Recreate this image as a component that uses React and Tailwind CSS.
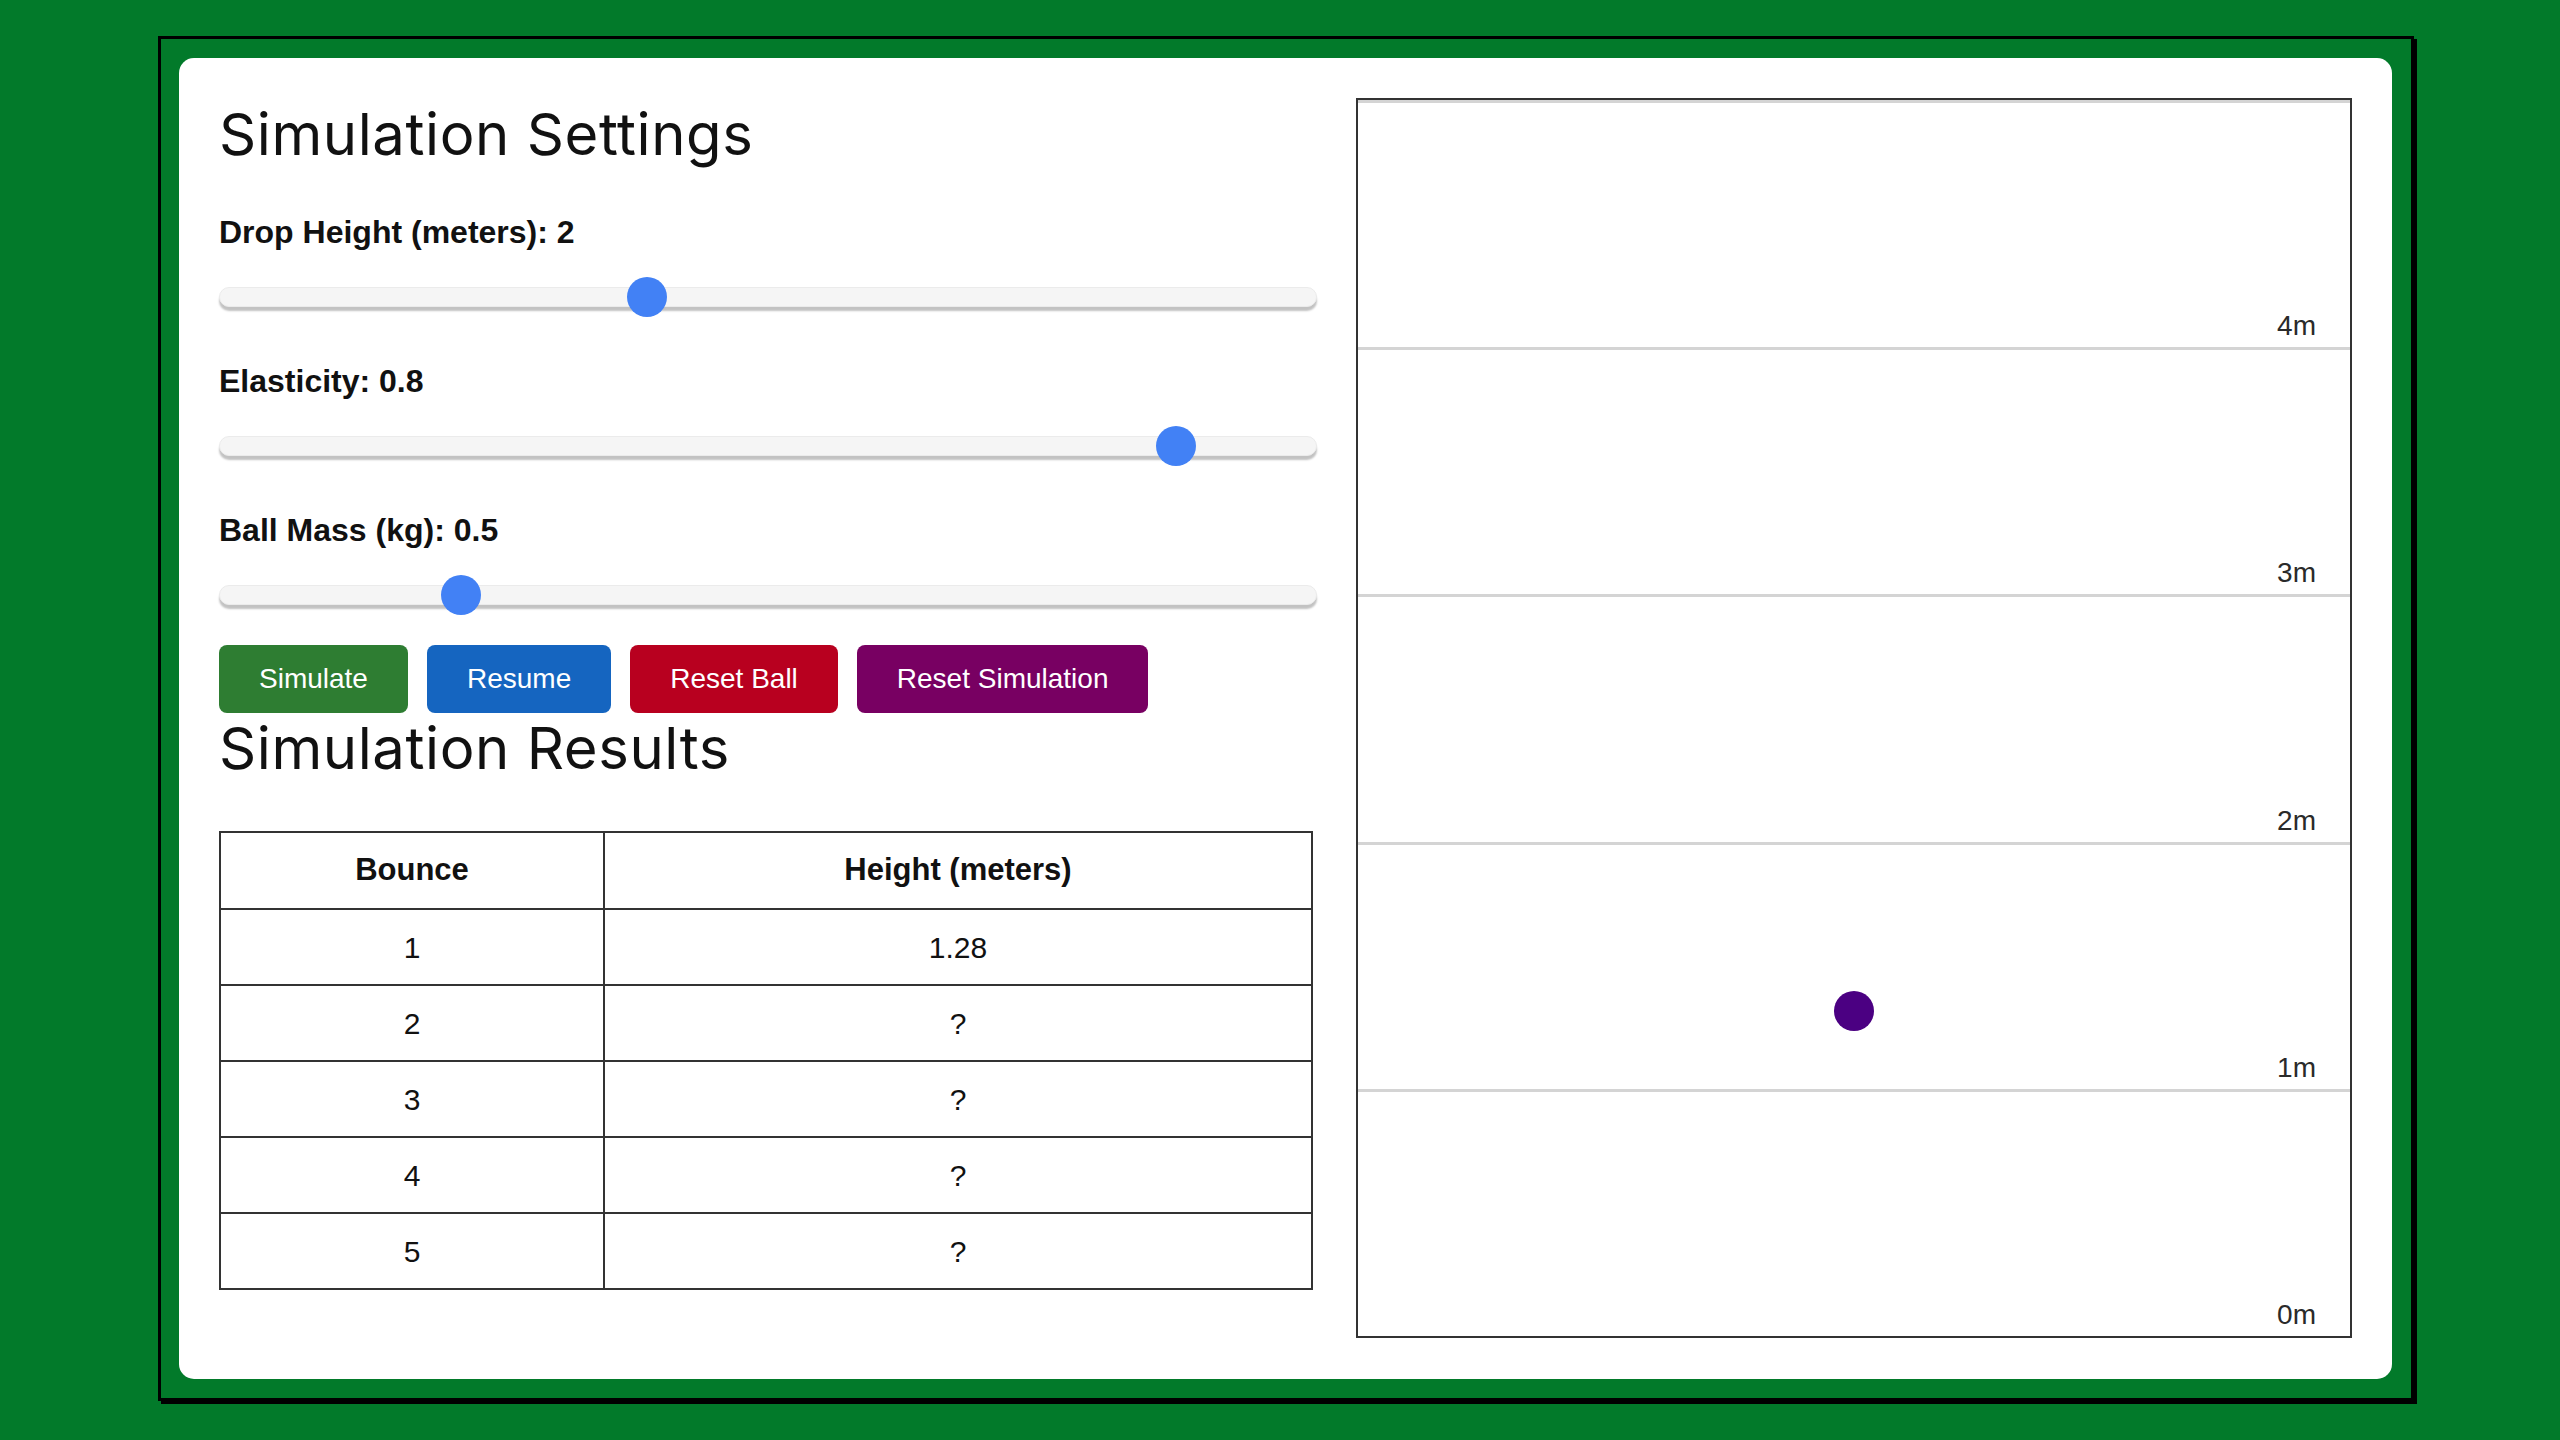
import React from "react";

const sans = { fontFamily: '"Liberation Sans", Arial, sans-serif' };
const title = { fontFamily: 'Inter, "Noto Sans", sans-serif' };

function Slider({ label, thumbLeft, labelMt, sliderMt }) {
  return (
    <>
      <div
        className={`${labelMt} text-[32px] leading-[36px] font-bold text-[#111]`}
        style={sans}
      >
        {label}
      </div>
      <div className={`relative ${sliderMt} h-[40px] w-[1098px] flex items-center`}>
        <div className="h-[20px] w-full rounded-full bg-[#f5f5f5] border border-[#ebebeb] shadow-[0_4px_2px_#c2c2c2]" />
        <div
          className={`absolute top-0 h-[40px] w-[40px] rounded-full bg-[#4281f5] ${thumbLeft}`}
        />
      </div>
    </>
  );
}

function Button({ children, color }) {
  return (
    <button
      className={`h-[68px] px-[40px] rounded-[8px] text-[28px] leading-[32px] text-white ${color}`}
      style={sans}
    >
      {children}
    </button>
  );
}

const rows = [
  ["1", "1.28"],
  ["2", "?"],
  ["3", "?"],
  ["4", "?"],
  ["5", "?"],
];

const levels = ["4m", "3m", "2m", "1m", "0m"];

export default function App() {
  return (
    <div className="min-h-screen w-full bg-[#027a2a] pl-[158px] pt-[36px]">
      <div className="w-[2256px] h-[1365px] border-[3px] border-black shadow-[3px_3px_0_#000] p-[19px] pl-[18px]">
        <div className="h-full w-full rounded-[15px] bg-white p-[40px] flex gap-[39px] items-start">
          {/* Left column */}
          <div className="w-[1098px] flex flex-col">
            <h2
              className="text-[58px] leading-[68px] font-normal text-[#111] tracking-[0.01em] translate-y-[2px]"
              style={title}
            >
              Simulation Settings
            </h2>
            <Slider
              label="Drop Height (meters): 2"
              thumbLeft="left-[408px]"
              labelMt="mt-[48px]"
              sliderMt="mt-[27px]"
            />
            <Slider
              label="Elasticity: 0.8"
              thumbLeft="left-[937px]"
              labelMt="mt-[46px]"
              sliderMt="mt-[27px]"
            />
            <Slider
              label="Ball Mass (kg): 0.5"
              thumbLeft="left-[222px]"
              labelMt="mt-[46px]"
              sliderMt="mt-[27px]"
            />

            <div className="mt-[30px] flex gap-[19px]">
              <Button color="bg-[#2e7d32]">Simulate</Button>
              <Button color="bg-[#1565c0]">Resume</Button>
              <Button color="bg-[#b8001f]">Reset Ball</Button>
              <Button color="bg-[#780062]">Reset Simulation</Button>
            </div>

            <h2
              className="mt-[1px] text-[58px] leading-[68px] font-normal text-[#111] tracking-[0.01em]"
              style={title}
            >
              Simulation Results
            </h2>

            <table
              className="mt-[49px] w-[1094px] border-collapse border-2 border-[#333] text-[#111]"
              style={sans}
            >
              <thead>
                <tr>
                  <th className="w-[384px] h-[77px] border-2 border-[#333] text-[31px] font-bold text-center">
                    Bounce
                  </th>
                  <th className="h-[77px] border-2 border-[#333] text-[31px] font-bold text-center">
                    Height (meters)
                  </th>
                </tr>
              </thead>
              <tbody>
                {rows.map(([b, h]) => (
                  <tr key={b}>
                    <td className="h-[76px] border-2 border-[#333] text-[30px] text-center">
                      {b}
                    </td>
                    <td className="h-[76px] border-2 border-[#333] text-[30px] text-center">
                      {h}
                    </td>
                  </tr>
                ))}
              </tbody>
            </table>
          </div>

          {/* Canvas */}
          <div className="relative flex-1 h-[1240px] border-2 border-[#333] flex flex-col">
            <div className="h-[3px] bg-[#d4d4d4]" />
            {levels.map((lv, i) => (
              <div
                key={lv}
                className={`flex-1 flex items-end justify-end pr-[34px] pb-[5px] ${
                  i < levels.length - 1 ? "border-b-[3px] border-[#d4d4d4]" : ""
                }`}
              >
                <span
                  className="text-[28px] leading-[32px] text-[#2a2a2a]"
                  style={sans}
                >
                  {lv}
                </span>
              </div>
            ))}
            <div className="absolute left-1/2 top-[891px] -translate-x-1/2 h-[40px] w-[40px] rounded-full bg-[#4b0082]" />
          </div>
        </div>
      </div>
    </div>
  );
}
